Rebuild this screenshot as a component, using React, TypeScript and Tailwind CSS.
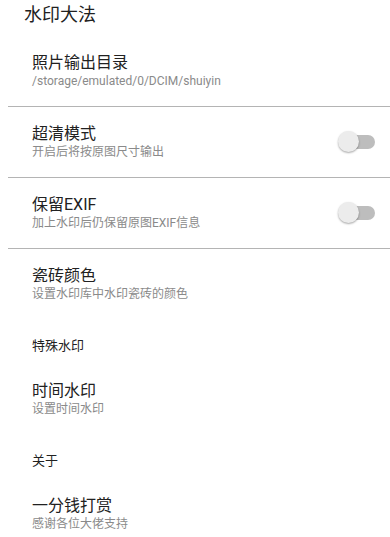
import React from 'react';

const FONT = "font-['Roboto','Noto_Sans_CJK_SC',sans-serif]";

function Toggle() {
  return (
    <div className="relative w-[37px] h-[21px] shrink-0">
      <div className="absolute left-[3px] top-[4px] w-[34px] h-[14px] rounded-full bg-[#bdbdbd]" />
      <div className="absolute left-0 top-0 w-[21px] h-[21px] rounded-full bg-[#ececec] shadow-[0_1px_2px_rgba(0,0,0,0.35)]" />
    </div>
  );
}

interface PrefProps {
  title: string;
  summary: string;
  toggle?: boolean;
}

function Pref({ title, summary, toggle }: PrefProps) {
  return (
    <div className="flex items-center pl-8 pr-[15px] pt-4 pb-[17px]">
      <div className="flex-1 min-w-0">
        <div className="text-[16px] leading-[21px] text-[#212121]">{title}</div>
        <div className="text-[12px] leading-[16px] text-[#8a8a8a]">{summary}</div>
      </div>
      {toggle && <Toggle />}
    </div>
  );
}

function Divider() {
  return <div className="ml-2 h-px bg-[#b4b4b4]" />;
}

function Category({ label }: { label: string }) {
  return (
    <div className="pl-8 pt-[18px] pb-[9px] text-[13px] leading-[18px] text-[#212121]">{label}</div>
  );
}

export default function App() {
  return (
    <div className={`w-[390px] h-[537px] bg-white overflow-hidden ${FONT}`}>
      <div className="h-9 pl-6 pt-[3px] text-[18px] leading-[24px] text-[#212121]">水印大法</div>
      <Pref title="照片输出目录" summary="/storage/emulated/0/DCIM/shuiyin" />
      <Divider />
      <Pref title="超清模式" summary="开启后将按原图尺寸输出" toggle />
      <Divider />
      <Pref title="保留EXIF" summary="加上水印后仍保留原图EXIF信息" toggle />
      <Divider />
      <Pref title="瓷砖颜色" summary="设置水印库中水印瓷砖的颜色" />
      <Category label="特殊水印" />
      <Pref title="时间水印" summary="设置时间水印" />
      <Category label="关于" />
      <Pref title="一分钱打赏" summary="感谢各位大佬支持" />
    </div>
  );
}
